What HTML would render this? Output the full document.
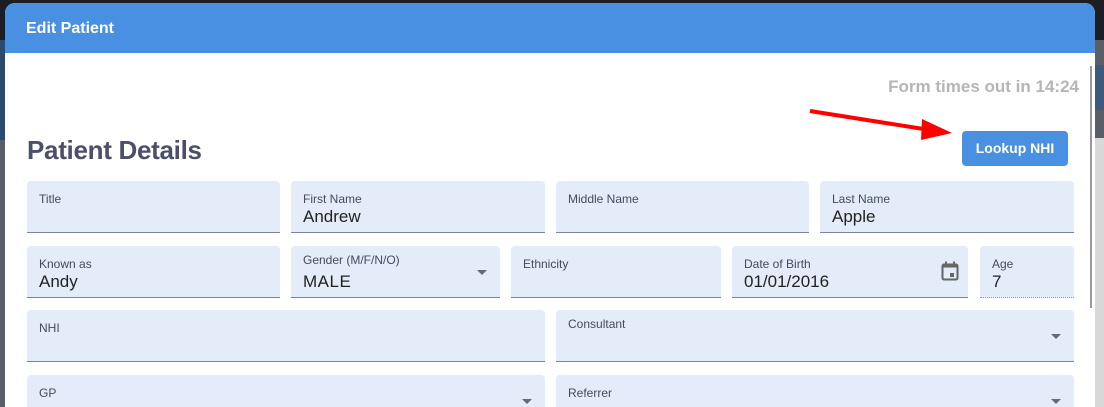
<!DOCTYPE html>
<html style="width:1104px;height:407px;overflow:hidden"><head><meta charset="utf-8"><style>
*{box-sizing:border-box;margin:0;padding:0}
body{width:1104px;height:407px;overflow:hidden;position:relative;background:#5a5e66;font-family:"Liberation Sans",sans-serif}
.topbar{position:absolute;left:0;top:0;width:1104px;height:40px;background:#1c1e23}
.lstrip{position:absolute;left:0;top:40px;width:6px;height:100px;background:#2a4a6e}
.rstrip{position:absolute;right:0;top:65px;width:12px;height:45px;background:#3d5a7a}
.rstrip2{position:absolute;right:0;top:138px;width:12px;height:270px;background:#d8d8d8}
.modal{position:absolute;left:5px;top:3px;width:1090px;height:404px;background:#fff;border-radius:10px 10px 0 0;overflow:hidden}
.hdr{height:50px;background:#4a90e2;color:#fff;font-weight:bold;font-size:16px;padding:17px 0 0 21px}
.timer{position:absolute;right:16px;top:74px;color:#b5b5b5;font-weight:bold;font-size:17px}
h2{position:absolute;left:22px;top:132px;font-size:26px;font-weight:bold;color:#4a5068;letter-spacing:-.3px}
.btn{position:absolute;left:957px;top:128px;width:106px;height:35px;background:#4a90e2;border-radius:4px;color:#fff;font-weight:bold;font-size:14px;text-align:center;line-height:35px}
.f{position:absolute;background:#e3ecf8;border-radius:4px 4px 0 0;border-bottom:1px solid #7d8594;overflow:hidden}
.f .l{position:absolute;left:12px;top:11px;font-size:12px;color:#454b5e}
.f .v{position:absolute;left:12px;top:26px;font-size:17px;color:#222}
.dd{position:absolute;right:13px;top:24px;width:0;height:0;border-left:5px solid transparent;border-right:5px solid transparent;border-top:5px solid #6a6a6a}
.sb{position:absolute;left:1085px;top:63px;width:2px;height:242px;background:#999}
</style></head><body>
<div class="topbar"></div><div class="lstrip"></div><div class="rstrip"></div><div class="rstrip2"></div>
<div class="modal">
<div class="hdr">Edit Patient</div>
<div class="timer">Form times out in 14:24</div>
<h2>Patient Details</h2>
<div class="btn">Lookup NHI</div>
<div class="sb"></div>
</div>
<svg style="position:absolute;left:0;top:0" width="1104" height="407"><line x1="810" y1="111" x2="930" y2="130" stroke="#f00" stroke-width="4"/><polygon points="922,119 952,133 921,140" fill="#f00"/></svg>
<div class="f" style="left:27px;top:181px;width:253px;height:52px"><div class="l">Title</div></div>
<div class="f" style="left:291px;top:181px;width:254px;height:52px"><div class="l">First Name</div><div class="v">Andrew</div></div>
<div class="f" style="left:556px;top:181px;width:253px;height:52px"><div class="l">Middle Name</div></div>
<div class="f" style="left:820px;top:181px;width:254px;height:52px"><div class="l">Last Name</div><div class="v">Apple</div></div>
<div class="f" style="left:27px;top:246px;width:253px;height:52px"><div class="l">Known as</div><div class="v">Andy</div></div>
<div class="f" style="left:291px;top:246px;width:209px;height:52px"><div class="l" style="top:7px">Gender (M/F/N/O)</div><div class="v" style="top:26px;letter-spacing:.5px">MALE</div><div class="dd"></div></div>
<div class="f" style="left:511px;top:246px;width:210px;height:52px"><div class="l">Ethnicity</div></div>
<div class="f" style="left:732px;top:246px;width:236px;height:52px"><div class="l">Date of Birth</div><div class="v">01/01/2016</div>
<svg style="position:absolute;right:9px;top:15px" width="18" height="20" viewBox="0 0 18 20"><rect x="1.5" y="3.5" width="15" height="15" rx="1.5" fill="none" stroke="#666" stroke-width="2"/><rect x="1.5" y="3.5" width="15" height="3" fill="#666"/><rect x="4" y="0.5" width="2" height="4" fill="#666"/><rect x="12" y="0.5" width="2" height="4" fill="#666"/><rect x="9" y="12" width="4" height="4" fill="#666"/></svg></div>
<div class="f" style="left:980px;top:246px;width:94px;height:52px;border-bottom:1px dotted #999"><div class="l">Age</div><div class="v">7</div></div>
<div class="f" style="left:27px;top:310px;width:518px;height:52px"><div class="l">NHI</div></div>
<div class="f" style="left:556px;top:310px;width:518px;height:52px"><div class="l" style="top:7px">Consultant</div><div class="dd"></div></div>
<div class="f" style="left:27px;top:375px;width:518px;height:32px;border-bottom:none"><div class="l">GP</div><div class="dd"></div></div>
<div class="f" style="left:556px;top:375px;width:518px;height:32px;border-bottom:none"><div class="l">Referrer</div><div class="dd"></div></div>
</body></html>
